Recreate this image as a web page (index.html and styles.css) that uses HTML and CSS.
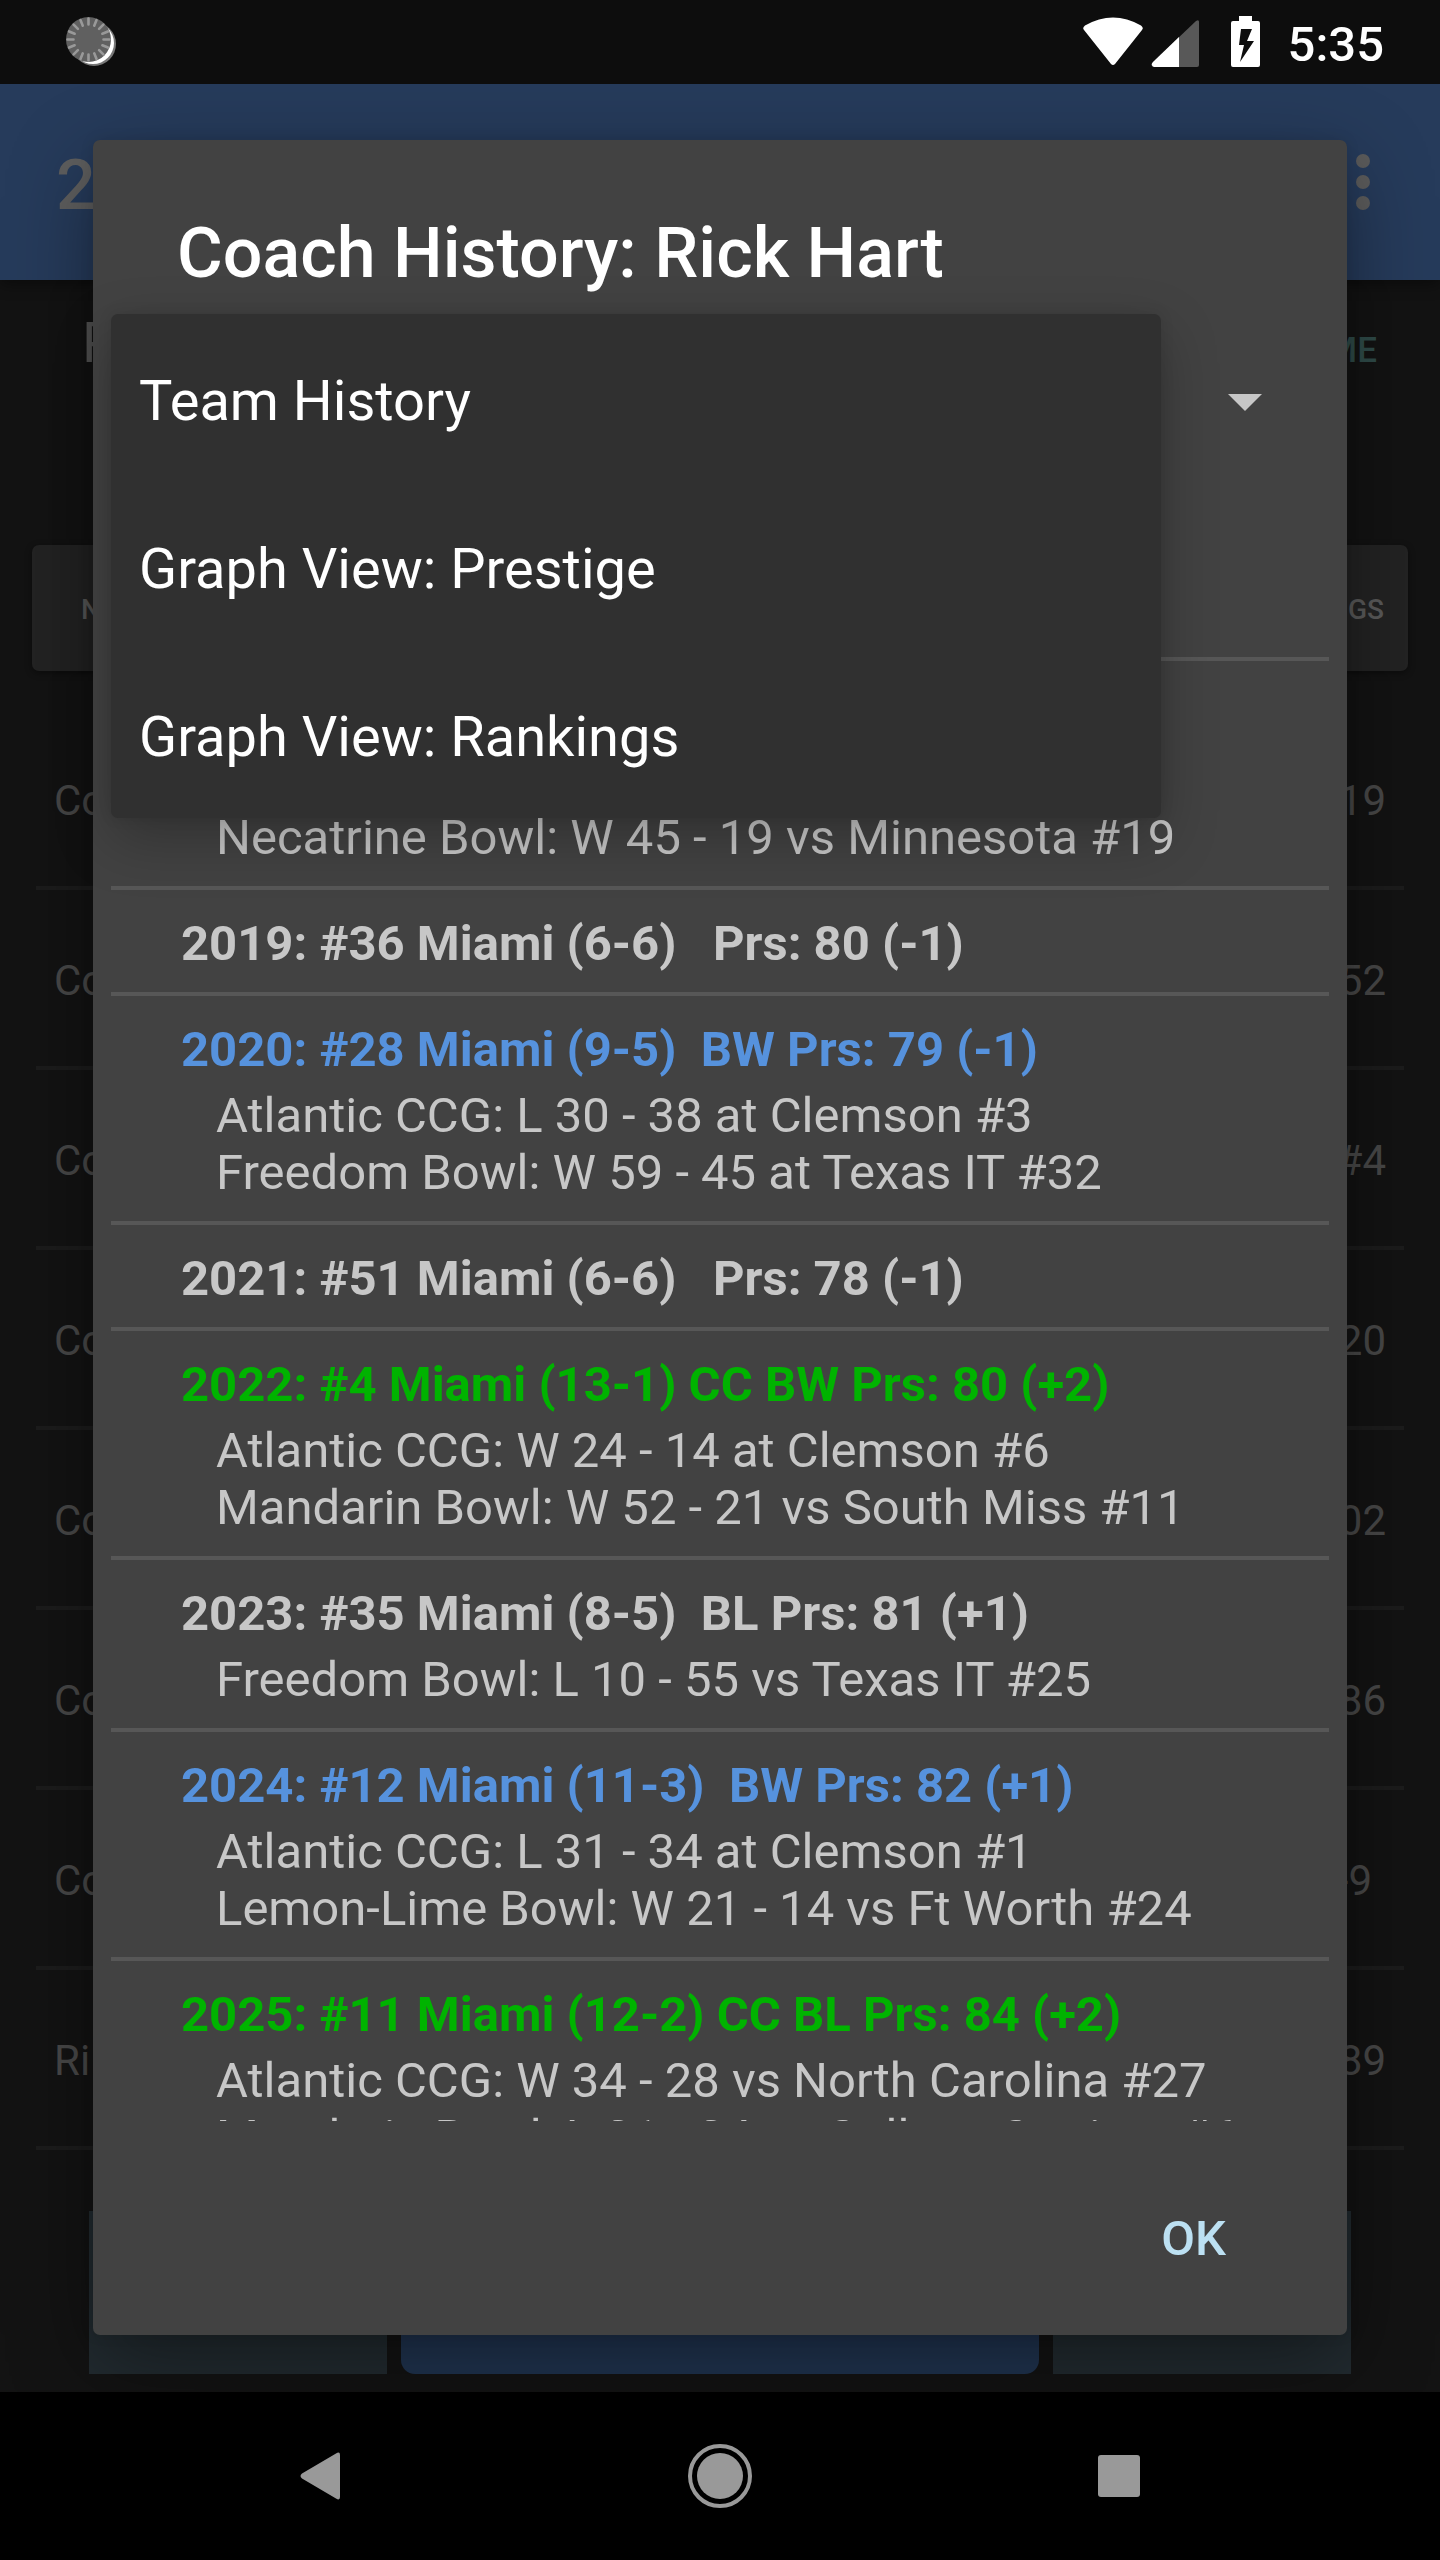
FILE: index.html
```
<!DOCTYPE html>
<html lang="en">
<head>
<meta charset="utf-8">
<title>Coach History</title>
<link rel="stylesheet" href="styles.css">
</head>
<body>
<div class="device">
  <header class="status">
    <svg class="sync" viewBox="0 0 52 52" width="52" height="52" aria-hidden="true">
      <circle cx="28" cy="28" r="22" fill="#777"/>
      <circle cx="27" cy="27" r="21" fill="#fff"/>
      <circle cx="22.500" cy="23.500" r="22.500" fill="#606060"/>
      <g stroke="#999" stroke-width="2.600" stroke-linecap="round">
        <path id="rays" d="M22.500 2.500V8.500M22.500 38.500V44.500M1.500 23.500H7.500M37.500 23.500H43.500"/>
        <use href="#rays" transform="rotate(22.500 22.500 23.500)"/>
        <use href="#rays" transform="rotate(45 22.500 23.500)"/>
        <use href="#rays" transform="rotate(67.500 22.500 23.500)"/>
      </g>
    </svg>
    <svg class="indicators" viewBox="0 0 180 52" width="180" height="52" aria-hidden="true">
      <path d="M2 14Q0 12 3 9.500Q31-6.500 59 9.500Q62 12 60 14L33 48Q31 50 29 48Z" fill="#fff"/>
      <path d="M71 51Q68 49 71 46L114 5Q117 3 117 6V49Q117 51 115 51Z" fill="#585858"/>
      <path d="M72 51Q68 49 71 46L97 21V51Z" fill="#fff"/>
      <path d="M157 0H170V5H176Q178 5 178 7V49Q178 51 176 51H151Q149 51 149 49V7Q149 5 151 5H157Z" fill="#fff"/>
      <path d="M159 13H170L165 25H172L158 46L162 29H157Z" fill="#0d0d0d"/>
    </svg>
    <time class="clock">5:35</time>
  </header>

  <div class="app">
    <div class="toolbar">
      <span class="toolbar-title">2</span>
      <svg class="overflow" viewBox="0 0 14 56" width="14" height="56" aria-hidden="true"><g fill="#5c5c5c"><circle cx="7" cy="7" r="7"/><circle cx="7" cy="28" r="7"/><circle cx="7" cy="49" r="7"/></g></svg>
    </div>
    <div class="summary"><span class="summary-name">P</span><span class="summary-link">ME</span></div>
    <div class="tabs"><span>N</span><span>NGS</span></div>
    <ul class="stats">
      <li><span>Co</span><span>19</span></li>
      <li><span>Co</span><span>52</span></li>
      <li><span>Co</span><span>#4</span></li>
      <li><span>Co</span><span>20</span></li>
      <li><span>Co</span><span>02</span></li>
      <li><span>Co</span><span>86</span></li>
      <li><span>Co</span><span class="record">-9</span></li>
      <li><span>Ri</span><span>89</span></li>
    </ul>
    <div class="actions"><div class="action"></div><div class="action primary"></div><div class="action"></div></div>

    <div class="dialog" role="dialog" aria-labelledby="dialog-title">
      <h1 class="dialog-title" id="dialog-title">Coach History: Rick Hart</h1>
      <div class="spinner">
        <button class="spinner-button" type="button" aria-label="Choose view">
          <svg viewBox="0 0 34 17" width="34" height="17" aria-hidden="true"><path d="M0 0H34L17 17Z" fill="#c7c7c7"/></svg>
        </button>
        <div class="menu" role="menu">
          <button type="button" role="menuitem">Team History</button>
          <button type="button" role="menuitem">Graph View: Prestige</button>
          <button type="button" role="menuitem">Graph View: Rankings</button>
        </div>
      </div>
      <div class="history">
        <section class="season scrolled"><p>Necatrine Bowl: W 45 - 19 vs Minnesota #19</p></section>
        <section class="season"><h2>2019: #36 Miami (6-6)   Prs: 80 (-1)</h2></section>
        <section class="season"><h2 class="blue">2020: #28 Miami (9-5)  BW Prs: 79 (-1)</h2><p>Atlantic CCG: L 30 - 38 at Clemson #3</p><p>Freedom Bowl: W 59 - 45 at Texas IT #32</p></section>
        <section class="season"><h2>2021: #51 Miami (6-6)   Prs: 78 (-1)</h2></section>
        <section class="season"><h2 class="green">2022: #4 Miami (13-1) CC BW Prs: 80 (+2)</h2><p>Atlantic CCG: W 24 - 14 at Clemson #6</p><p>Mandarin Bowl: W 52 - 21 vs South Miss #11</p></section>
        <section class="season"><h2>2023: #35 Miami (8-5)  BL Prs: 81 (+1)</h2><p>Freedom Bowl: L 10 - 55 vs Texas IT #25</p></section>
        <section class="season"><h2 class="blue">2024: #12 Miami (11-3)  BW Prs: 82 (+1)</h2><p>Atlantic CCG: L 31 - 34 at Clemson #1</p><p>Lemon-Lime Bowl: W 21 - 14 vs Ft Worth #24</p></section>
        <section class="season"><h2 class="green">2025: #11 Miami (12-2) CC BL Prs: 84 (+2)</h2><p>Atlantic CCG: W 34 - 28 vs North Carolina #27</p><p>Mandarin Bowl: L 21 - 24 vs College Station  #6</p></section>
      </div>
      <div class="dialog-actions"><button class="ok" type="button">OK</button></div>
    </div>
  </div>

  <nav class="navbar" aria-label="System">
    <button type="button" aria-label="Back"><svg viewBox="0 0 64 64" width="64" height="64"><path d="M13 29.500Q10 32 13 34.500L47 54.500Q51 57 51 53V11Q51 7 47 9.500Z" fill="#999"/></svg></button>
    <button type="button" aria-label="Home"><svg viewBox="0 0 64 64" width="64" height="64"><circle cx="32" cy="32" r="30" fill="none" stroke="#999" stroke-width="4"/><circle cx="32" cy="32" r="23" fill="#999"/></svg></button>
    <button type="button" aria-label="Recents"><svg viewBox="0 0 64 64" width="64" height="64"><rect x="11" y="11" width="42" height="42" rx="3" fill="#999"/></svg></button>
  </nav>
</div>
</body>
</html>
```

FILE: styles.css
```
* {
  box-sizing: border-box;
}

body {
  margin: 0;
  background: #000;
  font-family: Roboto, "Liberation Sans", sans-serif;
}

h1, h2, p, ul {
  margin: 0;
  padding: 0;
}

button {
  border: 0;
  padding: 0;
  background: none;
  font: inherit;
  color: inherit;
}

svg {
  display: block;
}

.device {
  display: flex;
  flex-direction: column;
  min-height: 100vh;
}

.status {
  display: flex;
  align-items: center;
  height: 84px;
  padding: 0 56px 0 66px;
  background: #0d0d0d;
}

.indicators {
  margin-left: auto;
}

.clock {
  margin-left: 26px;
  padding-top: 5px;
  color: #fff;
  font-size: 49px;
  font-weight: 500;
  line-height: 56px;
}

.app {
  position: relative;
  flex: 1;
  display: flex;
  flex-direction: column;
  overflow: hidden;
  background: #131313;
}

.toolbar {
  display: flex;
  align-items: center;
  justify-content: space-between;
  height: 196px;
  padding: 0 70px 0 56px;
  background: #263b5b;
  box-shadow: 0 4px 14px rgba(0, 0, 0, 0.4);
}

.toolbar-title {
  padding-top: 5px;
  color: #5f5f5f;
  font-size: 70px;
  font-weight: 500;
  line-height: 84px;
}

.summary {
  display: flex;
  align-items: baseline;
  justify-content: space-between;
  height: 265px;
  padding: 28px 63px 0 82px;
}

.summary-name {
  color: #585858;
  font-size: 56px;
  line-height: 70px;
}

.summary-link {
  color: #2f4b49;
  font-size: 35px;
  font-weight: 500;
}

.tabs {
  display: flex;
  align-items: center;
  justify-content: space-between;
  height: 126px;
  margin: 0 32px;
  padding: 2px 24px 0 49px;
  border-radius: 7px;
  background: #232323;
  box-shadow: 0 2px 7px rgba(0, 0, 0, 0.4);
  color: #5a5a5a;
  font-size: 28px;
  font-weight: 500;
}

.stats {
  margin: 39px 36px 0;
  list-style: none;
  color: #484848;
  font-size: 42px;
}

.stats li {
  display: flex;
  align-items: center;
  justify-content: space-between;
  height: 180px;
  padding: 4px 18px 0;
  border-bottom: 4px solid #1c1c1c;
}

.stats .record {
  padding-right: 14px;
}

.actions {
  display: grid;
  grid-template-columns: 298fr 637fr 298fr;
  gap: 14px;
  height: 163px;
  margin: auto 89px 18px;
}

.action {
  background: #222b30;
}

.action.primary {
  border-radius: 14px;
  background: #203450;
}

.dialog {
  position: absolute;
  inset: 56px 93px 57px;
  display: flex;
  flex-direction: column;
  border-radius: 7px;
  background: #424242;
  box-shadow: 0 28px 84px rgba(0, 0, 0, 0.4), 0 0 14px rgba(0, 0, 0, 0.1);
}

.dialog-title {
  padding: 68px 84px 2px;
  color: #fff;
  font-size: 70px;
  font-weight: 500;
  line-height: 90px;
}

.spinner {
  position: relative;
  height: 357px;
  padding: 14px 18px 0;
}

.spinner-button {
  display: flex;
  align-items: center;
  justify-content: flex-end;
  width: 100%;
  height: 168px;
  padding: 8px 67px 0 0;
}

.menu {
  position: absolute;
  top: 14px;
  left: 18px;
  right: 186px;
  border-radius: 7px;
  background: #303030;
  box-shadow: 0 21px 56px rgba(0, 0, 0, 0.25), 0 0 14px rgba(0, 0, 0, 0.1);
}

.menu button {
  display: block;
  width: 100%;
  height: 168px;
  padding: 6px 28px 0;
  color: #fff;
  font-size: 56px;
  line-height: 66px;
  text-align: left;
}

.history {
  flex: 1 1 0;
  min-height: 0;
  margin: 0 18px;
  overflow: hidden;
  color: #c7c7c7;
  font-size: 49px;
  line-height: 57px;
}

.season {
  padding: 25px 70px 20px;
  border-top: 4px solid #575757;
}

.season.scrolled {
  padding-top: 148px;
}

.season h2 {
  font-size: 49px;
  font-weight: 700;
  white-space: pre;
}

.season h2 + p {
  margin-top: 9px;
}

.season p {
  padding-left: 35px;
  white-space: pre;
}

.blue {
  color: #5692dd;
}

.green {
  color: #00b300;
}

.dialog-actions {
  display: flex;
  align-items: center;
  justify-content: flex-end;
  height: 214px;
  padding: 20px 93px 0;
}

.ok {
  min-width: 112px;
  height: 126px;
  padding: 0 28px;
  color: #bce0f2;
  font-size: 49px;
  font-weight: 500;
}

.navbar {
  display: flex;
  align-items: center;
  justify-content: center;
  gap: 335px;
  height: 168px;
  background: #000;
}
```
